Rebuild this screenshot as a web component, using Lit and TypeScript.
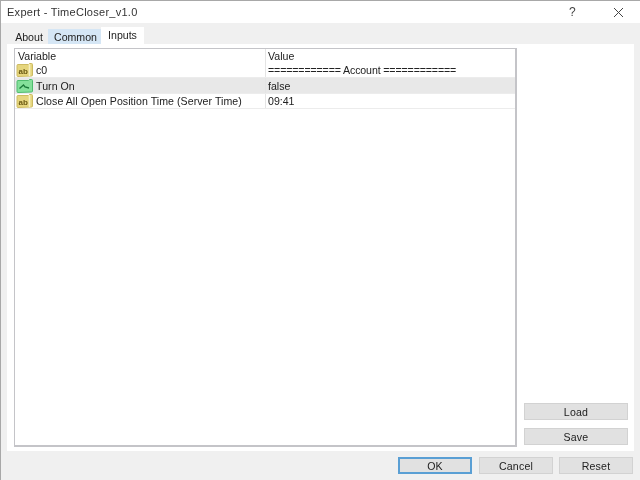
import { LitElement, html, css, svg } from "lit";
import { customElement } from "lit/decorators.js";

const abIcon = svg`<svg class="ico" width="17" height="14" viewBox="0 0 17 14">
  <path d="M1 2.5 Q1 1.5 2 1.5 L12.5 1.5 L13.5 0.5 L15.5 0.5 Q16.5 0.5 16.5 1.5 L16.5 12 Q16.5 13 15.5 13 L2 13.5 Q1 13.5 1 12.5 Z" fill="#e6d67e" stroke="#cdbb62" stroke-width="1"/>
  <path d="M13.5 1 V13" stroke="#f7f0c0" stroke-width="1.6"/>
  <text x="7.2" y="10.5" text-anchor="middle" class="ab">ab</text>
</svg>`;

const boolIcon = svg`<svg class="ico" width="17" height="14" viewBox="0 0 17 14">
  <path d="M1 2.5 Q1 1.5 2 1.5 L12.5 1.5 L13.5 0.5 L15.5 0.5 Q16.5 0.5 16.5 1.5 L16.5 12 Q16.5 13 15.5 13 L2 13.5 Q1 13.5 1 12.5 Z" fill="#84e09a" stroke="#4ebc6e" stroke-width="1"/>
  <path d="M3.5 9.5 L7.5 6 L9 8 L13 9" fill="none" stroke="#1c7a3a" stroke-width="1.3"/>
</svg>`;

const rows = [
  { icon: abIcon, name: "c0", value: "============ Account ============", selected: false, sep: true },
  { icon: boolIcon, name: "Turn On", value: "false", selected: true, sep: false },
  { icon: abIcon, name: "Close All Open Position Time (Server Time)", value: "09:41", selected: false, sep: false },
];

@customElement("app-root")
export class AppRoot extends LitElement {
  static styles = css`
    :host {
      display: block;
      width: 640px;
      height: 480px;
      overflow: hidden;
      font-family: "Liberation Sans", Arial, sans-serif;
      font-size: 10.6px;
      color: #222;
      filter: blur(0.35px);
    }
    .win {
      box-sizing: border-box;
      width: 640px;
      height: 480px;
      display: flex;
      flex-direction: column;
      background: #f0f0f0;
      border-top: 1px solid #a8a8a8;
      border-left: 1px solid #a8a8a8;
    }
    .title {
      height: 22px;
      background: #fff;
      display: flex;
      align-items: center;
      padding-left: 6px;
      font-size: 11px;
      letter-spacing: 0.27px;
      color: #333;
      flex: none;
    }
    .title .name { flex: 1; }
    .help { width: 8px; margin-right: 36px; font-size: 12px; color: #444; }
    .close { margin-right: 16px; display: block; }
    .tabs {
      display: flex;
      height: 21px;
      padding: 5px 0 0 7px;
      box-sizing: border-box;
      flex: none;
      align-items: flex-end;
    }
    .tab {
      height: 15px;
      display: flex;
      align-items: center;
      justify-content: center;
      box-sizing: border-box;
    }
    .about { width: 40px; padding-left: 2px; }
    .common { width: 53px; background: #d5e6f5; padding-left: 2px; }
    .inputs { width: 43px; height: 17px; background: #fff; padding-bottom: 2px; }
    .panel {
      margin-left: 6px;
      width: 627px;
      height: 407px;
      flex: none;
      box-sizing: border-box;
      background: #fff;
      padding: 4px 6px 4px 7px;
      display: flex;
      gap: 7px;
    }
    .table {
      width: 503px;
      box-sizing: border-box;
      border: 1px solid #c4c4c8;
      border-width: 1px 2px 2px 1px;
      flex: none;
      display: flex;
      flex-direction: column;
    }
    .row {
      display: grid;
      grid-template-columns: 250px 1fr;
      height: 15px;
      align-items: center;
      border-bottom: 1px solid #ececec;
      box-sizing: border-box;
    }
    .head { height: 14px; border-bottom: none; }
    .row.sel { background: #e8e8e8; height: 16px; }
    .cell {
      display: flex;
      align-items: center;
      height: 100%;
      padding-left: 3px;
      box-sizing: border-box;
      white-space: nowrap;
      overflow: hidden;
    }
    .cell.icon-cell { padding-left: 0; letter-spacing: 0.05px; }
    .val { border-left: 1px solid #e4e4e4; padding-left: 2px; }
    .val.sep { letter-spacing: -0.12px; }
    .ico { flex: none; margin: 0 3px 0 1px; }
    .ab { font: bold 8px "Liberation Sans", sans-serif; fill: #6b5a14; }
    .side {
      flex: 1;
      display: flex;
      flex-direction: column;
      justify-content: flex-end;
      gap: 8px;
      padding-bottom: 2px;
    }
    .btn {
      height: 17px;
      box-sizing: border-box;
      background: #e1e1e1;
      border: 1px solid #d2d2d2;
      display: flex;
      align-items: center;
      justify-content: center;
      letter-spacing: 0.2px;
    }
    .side .btn { width: 104px; }
    .foot {
      flex: 1;
      display: flex;
      justify-content: flex-end;
      gap: 6px;
      padding: 6px 7px 0 0;
    }
    .foot .btn { width: 74px; }
    .foot .ok { border: 2px solid #5a9fd4; margin-right: 1px; }
  `;

  render() {
    return html`
      <div class="win">
        <div class="title">
          <span class="name">Expert - TimeCloser_v1.0</span>
          <span class="help">?</span>
          <svg class="close" width="11" height="11" viewBox="0 0 11 11"><path d="M1 1 L10 10 M10 1 L1 10" stroke="#444" stroke-width="1"/></svg>
        </div>
        <div class="tabs">
          <div class="tab about">About</div>
          <div class="tab common">Common</div>
          <div class="tab inputs">Inputs</div>
        </div>
        <div class="panel">
          <div class="table">
            <div class="row head">
              <div class="cell">Variable</div>
              <div class="cell val">Value</div>
            </div>
            ${rows.map(
              (r) => html`<div class="row ${r.selected ? "sel" : ""}">
                <div class="cell icon-cell">${r.icon}<span>${r.name}</span></div>
                <div class="cell val ${r.sep ? "sep" : ""}">${r.value}</div>
              </div>`
            )}
          </div>
          <div class="side">
            <div class="btn">Load</div>
            <div class="btn">Save</div>
          </div>
        </div>
        <div class="foot">
          <div class="btn ok">OK</div>
          <div class="btn">Cancel</div>
          <div class="btn">Reset</div>
        </div>
      </div>
    `;
  }
}
